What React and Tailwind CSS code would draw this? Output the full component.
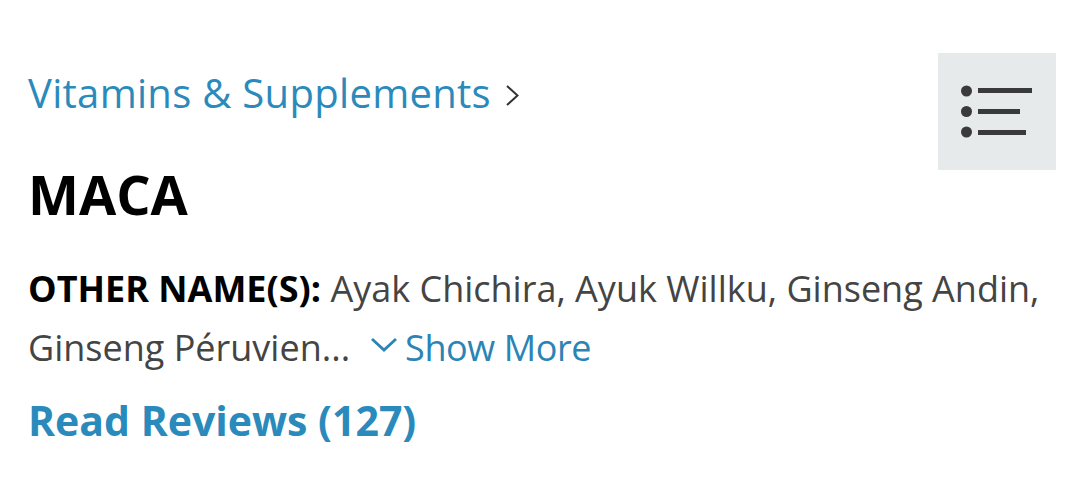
import React from 'react';

const MenuIcon = () => (
  <svg width="72" height="54" viewBox="0 0 72 54" fill="none">
    <circle cx="5.5" cy="6" r="5.5" fill="#3a3a3c" />
    <circle cx="5.5" cy="26.5" r="5.5" fill="#3a3a3c" />
    <circle cx="5.5" cy="47" r="5.5" fill="#3a3a3c" />
    <rect x="17" y="3" width="54" height="5" fill="#3a3a3c" />
    <rect x="17" y="24" width="42" height="5" fill="#3a3a3c" />
    <rect x="17" y="45" width="48" height="5" fill="#3a3a3c" />
  </svg>
);

const App = () => {
  return (
    <div
      className="w-[1080px] h-[494px] bg-white overflow-hidden pl-[28px] pr-[24px] pt-[53px]"
      style={{ fontFamily: '"Open Sans", "Liberation Sans", sans-serif' }}
    >
      <div className="flex items-start justify-between">
        <a className="mt-[16px] flex items-center text-[40px] leading-[48px] tracking-[0.3px] text-[#2a8abb]">
          Vitamins &amp; Supplements
          <svg className="ml-[15px] mt-[4px]" width="13" height="21" viewBox="0 0 13 21" fill="none">
            <path d="M1 1l10.5 9.5L1 20" stroke="#333" strokeWidth="2" />
          </svg>
        </a>
        <button className="w-[118px] h-[117px] bg-[#e6eaeb] flex items-center justify-center">
          <MenuIcon />
        </button>
      </div>

      <h1 className="-mt-[4px] text-[54px] leading-[56px] font-bold text-black">MACA</h1>

      <div className="mt-[37px] text-[36px] leading-[59px] text-[#444444]">
        <div className="whitespace-nowrap">
          <span className="font-bold text-black">OTHER NAME(S):</span> Ayak Chichira, Ayuk Willku, Ginseng Andin,
        </div>
        <div className="whitespace-nowrap flex items-center">
          <span>Ginseng Péruvien...</span>
          <span className="ml-[20px] flex items-center tracking-[-0.4px] text-[#2a84b4]">
            <svg className="mr-[7px] -mt-[6px]" width="28" height="16" viewBox="0 0 28 16" fill="none">
              <path d="M2 2l12 11L26 2" stroke="#2a84b4" strokeWidth="2.8" />
            </svg>
            Show More
          </span>
        </div>
      </div>

      <a className="block mt-[17px] text-[41px] leading-[52px] font-bold text-[#2a8abb]">Read Reviews (127)</a>
    </div>
  );
};

export default App;
